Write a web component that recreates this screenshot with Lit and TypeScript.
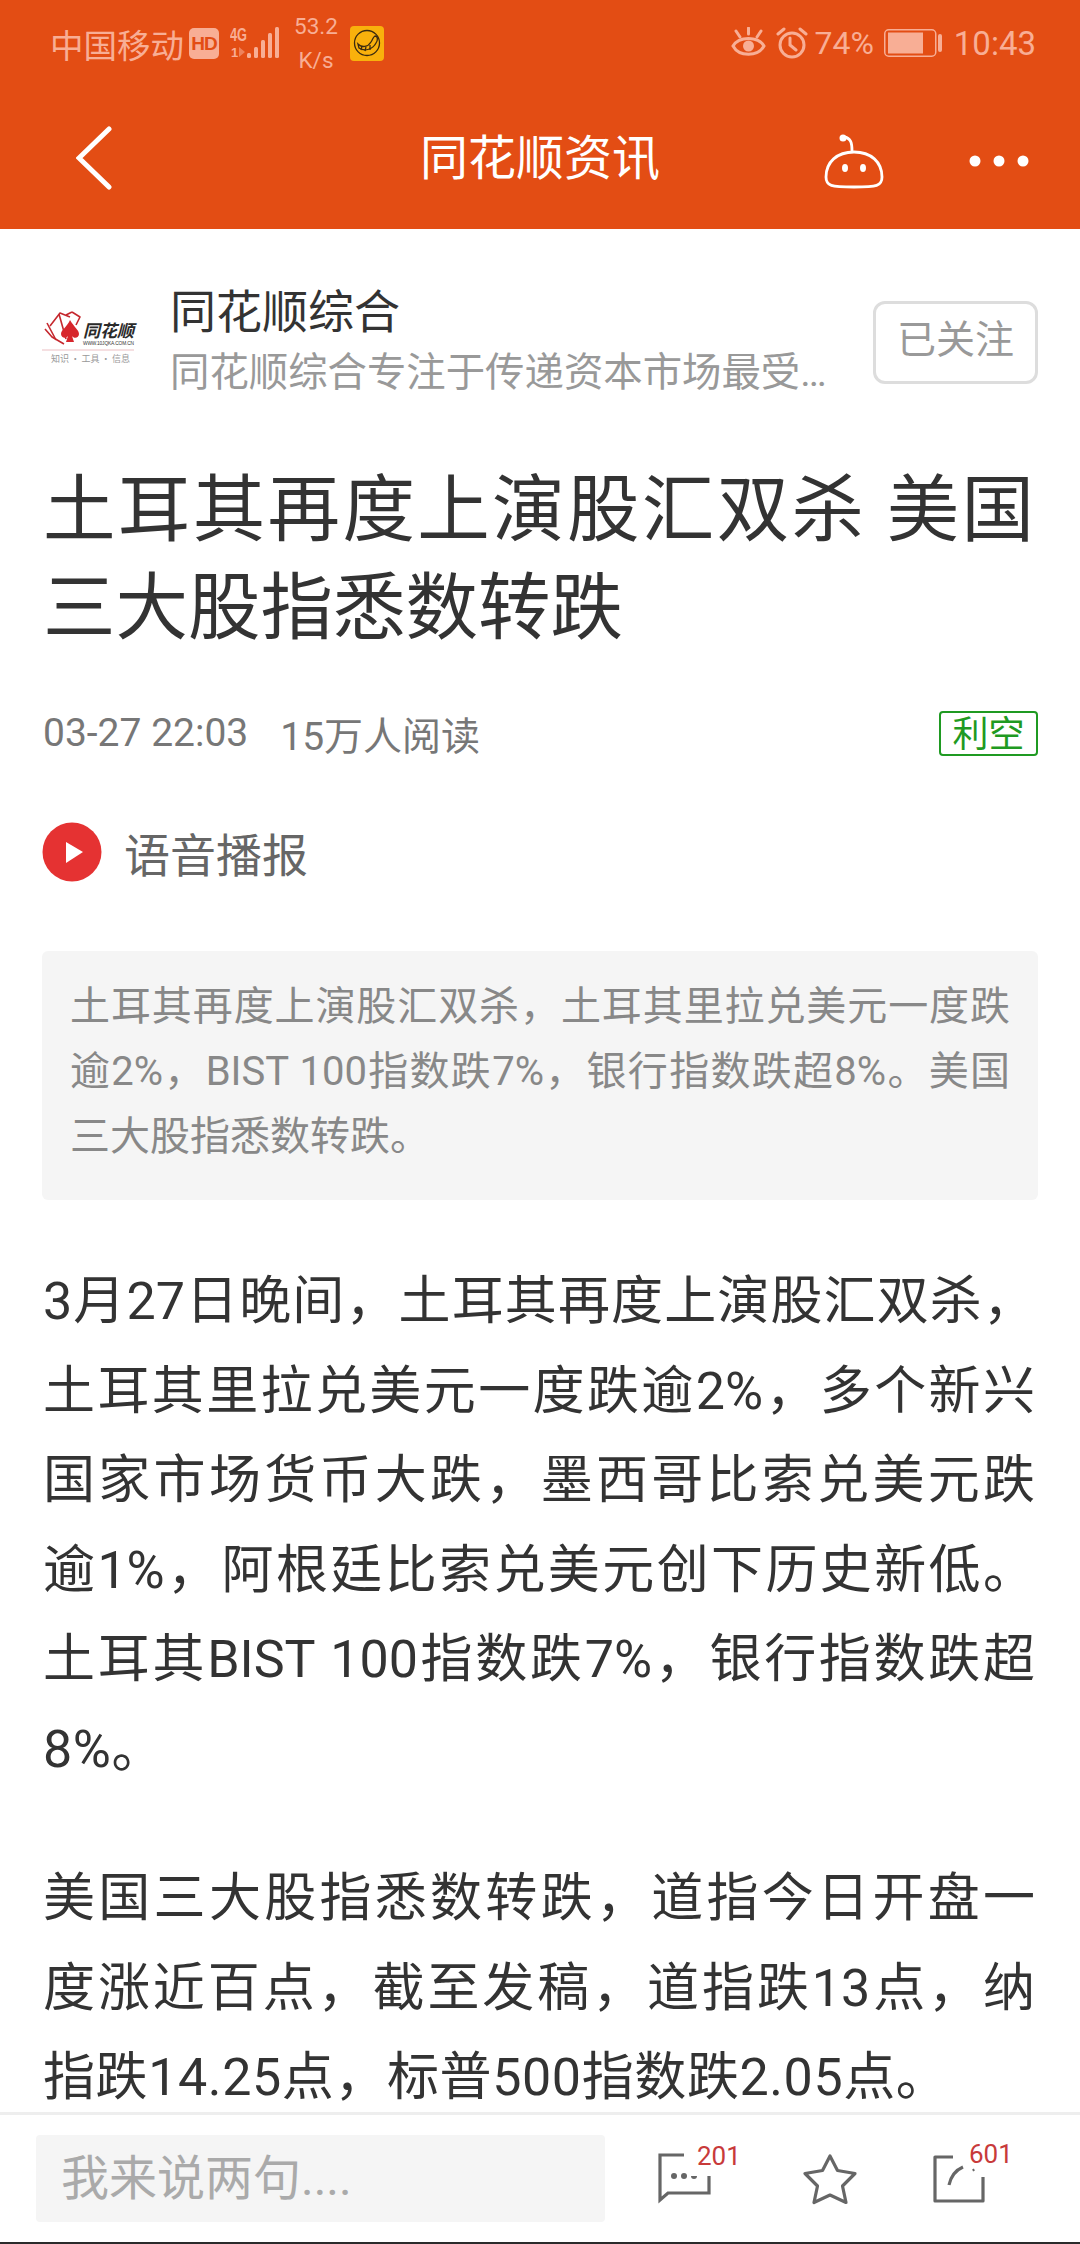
import { LitElement, html, css } from "lit";
import { customElement } from "lit/decorators.js";

@customElement("app-root")
export class AppRoot extends LitElement {
  static styles = css`
    :host { display: block; width: 1080px; height: 2244px; overflow: hidden; background: #fff;
      font-family: Roboto, "Noto Sans CJK SC", sans-serif; }
    * { box-sizing: border-box; }
    .page { height: 2244px; display: flex; flex-direction: column; }
    .head { height: 229px; background: #e34d14; flex: none; display: flex; flex-direction: column; }
    .status { height: 86px; display: flex; align-items: center; padding: 0 44px 0 50px; color: #f8ae95; font-size: 32px; }
    .carrier { font-size: 33.5px; }
    .hd { width: 30px; height: 31px; background: #f8ae95; color: #e34d14; border-radius: 5px; font: 700 19px/31px "Liberation Sans", sans-serif; text-align: center; margin-left: 5px; letter-spacing: -1px; }
    .sig { margin-left: 11px; }
    .speed { width: 44px; margin-left: 14px; text-align: center; font-size: 22.5px; line-height: 34px; }
    .app { width: 34px; height: 35px; margin-left: 12px; background: #f9b10c; border-radius: 4px; display: flex; align-items: center; justify-content: center; }
    .sright { margin-left: auto; display: flex; align-items: center; }
    .alarm { margin-left: 9px; }
    .pct { margin: 0 10px 0 6px; }
    .time { margin-left: 12px; font-size: 33px; }
    .nav { flex: 1; display: grid; grid-template-columns: 1fr auto 1fr; align-items: center; padding-top: 3px; }
    .back { margin-left: 76px; display: block; }
    .navtitle { color: #fff; font-size: 48px; line-height: 60px; }
    .acts { display: flex; justify-content: flex-end; align-items: center; }
    .robot { margin: 6px 84px 0 0; display: block; }
    .dots { margin: 4px 51px 0 0; display: block; }

    .content { flex: 1; min-height: 0; overflow: hidden; padding: 0 42px; }
    .author { display: flex; align-items: center; height: 181px; padding-top: 43px; }
    .logo { width: 128px; flex: none; margin-top: -8px; }
    .who { flex: 1; min-width: 0; padding-right: 30px; }
    .name { font-size: 46px; line-height: 63px; color: #333; margin: 3px 0 -3px; }
    .desc { font-size: 39.4px; line-height: 63px; color: #999; white-space: nowrap; }
    .follow { width: 165px; height: 83px; border: 3px solid #ddd; border-radius: 12px; color: #999; font-size: 39px; display: flex; align-items: center; justify-content: center; flex: none; margin-top: 2px; padding-bottom: 12px; }

    .title { margin: 0; font-weight: 400; font-size: 72.5px; line-height: 98px; color: #333; padding: 52px 4px 0 1px; }
    .meta { display: flex; align-items: center; margin-top: 52px; height: 46px; color: #777; font-size: 39px; padding-left: 1px; }
    .meta span + span { margin-left: 32px; }
    .tag { margin-left: auto; width: 99px; height: 45px; border: 2px solid #1f9a22; border-radius: 4px; color: #1f9a22; font-size: 36px; line-height: 44px; text-align: center; }
    .voice { display: flex; align-items: center; margin-top: 66px; height: 60px; color: #666; font-size: 46px; }
    .play { margin-right: 22px; }
    .summary { margin-top: 69px; height: 249px; background: #f5f5f5; border-radius: 6px; padding: 23px 28px 0; color: #888; font-size: 40px; line-height: 65px; }
    .body { color: #333; font-size: 52px; line-height: 89.5px; padding: 0 3px 0 1px; }
    .body p { margin: 0; }
    .body p + p { margin-top: 60px; }
    .body .first { margin-top: 57px; }
    .body .l { letter-spacing: .6px; }
    .l { display: block; white-space: nowrap; }
    .j { display: block; text-align: justify; text-align-last: justify; }

    .bar { height: 132px; flex: none; border-top: 3px solid #eee; border-bottom: 2px solid #2b2b2b; display: flex; align-items: center; background: #fff; }
    .input { margin-left: 36px; width: 569px; height: 87px; background: #f5f5f5; border-radius: 4px; padding-left: 25px; color: #aaa; font-size: 48px; line-height: 87px; }
    .ico { position: relative; flex: none; }
    .ico svg { display: block; }
    .c { margin-left: 51px; }
    .s { margin-left: 90px; }
    .r { margin-left: 74px; }
    .n { position: absolute; color: #c83a3a; font-size: 26px; line-height: 26px; }
    .n1 { left: 41px; top: -9px; }
    .n2 { left: 37px; top: -14px; }
  `;

  private logo() {
    return html`<svg class="logo" width="128" height="64" viewBox="0 0 128 64">
      <g fill="none" stroke="#c5282e" stroke-width="1.6" stroke-linejoin="round">
        <path d="M8 21 L18 8 L28 12"/><path d="M3 24 L10 32 L22 39"/><path d="M5 18 L14 35"/><path d="M17 9 L24 34"/><path d="M30 7 L38 12 L34 20"/><path d="M24 10 L30 7"/>
      </g>
      <path d="M28 15 C32 22 37 25 37 29 C37 33 32 34 30 31 L32 37 L24 37 L26 31 C24 34 19 33 19 29 C19 25 25 22 28 15Z" fill="#d7262c"/>
      <text x="41" y="32" font-size="17" font-style="italic" font-weight="700" fill="#2a2a2a" font-family="Noto Sans CJK SC, sans-serif" textLength="51">同花顺</text>
      <text x="41" y="39.5" font-size="4.8" fill="#333" font-family="Liberation Sans, sans-serif" textLength="51">WWW.10JQKA.COM.CN</text>
      <line x1="0" y1="45" x2="92" y2="45" stroke="#f2d5d7" stroke-width="1.5"/>
      <text x="9" y="56.5" font-size="9" fill="#999" font-family="Noto Sans CJK SC, sans-serif" textLength="79">知识 · 工具 · 信息</text>
    </svg>`;
  }

  render() {
    const c = "#f8ae95";
    return html`<div class="page">
      <div class="head">
        <div class="status">
          <span class="carrier">中国移动</span>
          <span class="hd">HD</span>
          <svg class="sig" width="50" height="34" viewBox="0 0 50 34">
            <text x="0" y="15" font-size="18" font-weight="700" fill="${c}" font-family="Liberation Sans, sans-serif" textLength="17" lengthAdjust="spacingAndGlyphs">4G</text>
            <text x="1" y="31" font-size="13" font-weight="700" fill="${c}" font-family="Liberation Sans, sans-serif">1</text>
            <path d="M9 21 L15 26 L9 31Z" fill="${c}" opacity=".55"/>
            <rect x="17" y="27" width="4" height="5" rx="1.5" fill="${c}"/>
            <rect x="24" y="21" width="4" height="11" rx="1.5" fill="${c}"/>
            <rect x="31" y="14" width="4" height="18" rx="1.5" fill="${c}"/>
            <rect x="38" y="7" width="4" height="25" rx="1.5" fill="${c}"/>
            <rect x="45" y="1" width="4" height="31" rx="1.5" fill="${c}"/>
          </svg>
          <div class="speed">53.2<br />K/s</div>
          <div class="app">
            <svg width="28" height="28" viewBox="0 0 28 28" fill="none" stroke="#3a2a10" stroke-width="1.3">
              <circle cx="14" cy="14" r="12.5"/>
              <path d="M5 15 C9 19 15 18 18 13 C20 10 20 8 22 7 C25 7 25 11 23 14 C20 20 12 23 6 19Z"/>
              <path d="M9 17 L8 21 M13 18 L12 22 M17 16 L17 21"/>
            </svg>
          </div>
          <div class="sright">
            <svg width="36" height="32" viewBox="0 0 36 32" fill="none" stroke="${c}" stroke-width="3">
              <path d="M2 19 C8 9 27 9 33 19 C27 30 8 30 2 19Z"/>
              <circle cx="17.5" cy="19" r="5.5" fill="${c}" stroke="none"/>
              <path d="M17.5 1 V7 M5 4 L9 10 M30 4 L26 10" stroke-linecap="round"/>
            </svg>
            <svg class="alarm" width="32" height="32" viewBox="0 0 32 32" fill="none" stroke="${c}" stroke-width="3" stroke-linecap="round">
              <circle cx="16" cy="18" r="12"/>
              <path d="M14 11 V18 L20 23 M2 7 L8 2 M30 7 L24 2"/>
            </svg>
            <span class="pct">74%</span>
            <svg width="58" height="28" viewBox="0 0 58 28" fill="none">
              <rect x=".75" y=".75" width="51" height="26.5" rx="4" stroke="${c}" stroke-width="1.5"/>
              <rect x="4" y="3.5" width="35" height="21" fill="${c}"/>
              <rect x="54" y="5" width="4" height="18" rx="2" fill="${c}"/>
            </svg>
            <span class="time">10:43</span>
          </div>
        </div>
        <div class="nav">
          <svg class="back" width="38" height="68" viewBox="0 0 38 68" fill="none" stroke="#fff" stroke-width="5" stroke-linecap="round">
            <path d="M33 4 L3 33 L33 62"/>
          </svg>
          <div class="navtitle">同花顺资讯</div>
          <div class="acts">
            <svg class="robot" width="62" height="56" viewBox="0 0 62 56" fill="none" stroke="#fff" stroke-width="2.8">
              <path d="M31 18 C48 18 59 28 59 43 C59 52 54 53 31 53 C8 53 3 52 3 43 C3 28 14 18 31 18Z"/>
              <path d="M21 3 C28 4 29 9 29 17" stroke-linecap="round"/>
              <circle cx="20" cy="4" r="3.5" fill="#fff" stroke="none"/>
              <ellipse cx="22" cy="34" rx="3" ry="4" fill="#fff" stroke="none"/>
              <ellipse cx="40" cy="34" rx="3" ry="4" fill="#fff" stroke="none"/>
            </svg>
            <svg class="dots" width="60" height="12" viewBox="0 0 60 12" fill="#fff">
              <circle cx="6" cy="6" r="5.5"/><circle cx="30" cy="6" r="5.5"/><circle cx="54" cy="6" r="5.5"/>
            </svg>
          </div>
        </div>
      </div>

      <div class="content">
        <div class="author">
          ${this.logo()}
          <div class="who">
            <div class="name">同花顺综合</div>
            <div class="desc">同花顺综合专注于传递资本市场最受…</div>
          </div>
          <div class="follow">已关注</div>
        </div>
        <h1 class="title"><span class="j">土耳其再度上演股汇双杀 美国</span><span class="l">三大股指悉数转跌</span></h1>
        <div class="meta"><span>03-27 22:03</span><span>15万人阅读</span><div class="tag">利空</div></div>
        <div class="voice">
          <svg class="play" width="60" height="60" viewBox="0 0 60 60">
            <circle cx="30" cy="30" r="29.5" fill="#e53232"/>
            <path d="M24 20 L41 30 L24 41Z" fill="#fff"/>
          </svg>
          语音播报
        </div>
        <div class="summary">
          <span class="j">土耳其再度上演股汇双杀，土耳其里拉兑美元一度跌</span>
          <span class="j">逾2%，BIST 100指数跌7%，银行指数跌超8%。美国</span>
          <span class="l">三大股指悉数转跌。</span>
        </div>
        <div class="body">
          <p class="first">
            <span class="j">3月27日晚间，土耳其再度上演股汇双杀，</span>
            <span class="j">土耳其里拉兑美元一度跌逾2%，多个新兴</span>
            <span class="j">国家市场货币大跌，墨西哥比索兑美元跌</span>
            <span class="j">逾1%，阿根廷比索兑美元创下历史新低。</span>
            <span class="j">土耳其BIST 100指数跌7%，银行指数跌超</span>
            <span class="l">8%。</span>
          </p>
          <p>
            <span class="j">美国三大股指悉数转跌，道指今日开盘一</span>
            <span class="j">度涨近百点，截至发稿，道指跌13点，纳</span>
            <span class="l">指跌14.25点，标普500指数跌2.05点。</span>
          </p>
        </div>
      </div>

      <div class="bar">
        <div class="input">我来说两句....</div>
        <div class="ico c">
          <svg width="56" height="54" viewBox="0 0 56 54" fill="none" stroke="#666" stroke-width="3.2">
            <path d="M28 3 H4 V48 L12 41 H53 V24"/>
            <g fill="#666" stroke="none"><circle cx="18" cy="24" r="3"/><circle cx="28" cy="24" r="3"/></g>
            <path d="M35 24 A3 3 0 0 0 41 24" fill="#666" stroke="none"/>
          </svg>
          <span class="n n1">201</span>
        </div>
        <div class="ico s">
          <svg width="56" height="52" viewBox="0 0 56 52" fill="none" stroke="#666" stroke-width="3.2" stroke-linejoin="round">
            <path d="M28 3 L35.5 17.5 L53 20.5 L40.5 33 L44 49.5 L28 42 L12 49.5 L15.5 33 L3 20.5 L20.5 17.5Z"/>
          </svg>
        </div>
        <div class="ico r">
          <svg width="54" height="48" viewBox="0 0 54 48" fill="none" stroke="#666" stroke-width="3.2" stroke-linejoin="round">
            <path d="M21 2 H3 V46 H51 V22"/>
            <path d="M17 30 C19 21 24 15 31 12"/>
            <path d="M41 14 L42 16" stroke-width="2"/>
          </svg>
          <span class="n n2">601</span>
        </div>
      </div>
    </div>`;
  }
}
